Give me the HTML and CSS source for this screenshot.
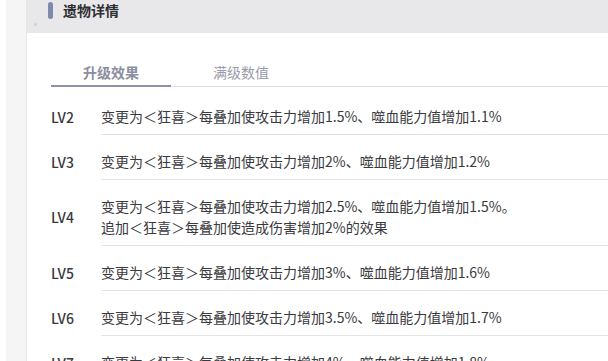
FILE: index.html
```html
<!DOCTYPE html>
<html lang="zh-CN">
<head>
<meta charset="utf-8">
<link rel="stylesheet" href="styles.css">
</head>
<body>
<div class="page">
  <aside class="rail"></aside>
  <main class="panel">
    <header class="head">
      <div class="title-row">
        <span class="accent"></span>
        <h1 class="title">遗物详情</h1>
      </div>
      <span class="dot"></span>
    </header>
    <section class="body">
      <nav class="tabs">
        <div class="tab active">升级效果</div>
        <div class="tab">满级数值</div>
      </nav>
      <ul class="levels">
        <li class="row"><span class="lv">LV2</span><div class="desc">变更为＜狂喜＞每叠加使攻击力增加1.5%、噬血能力值增加1.1%</div></li>
        <li class="row"><span class="lv">LV3</span><div class="desc">变更为＜狂喜＞每叠加使攻击力增加2%、噬血能力值增加1.2%</div></li>
        <li class="row"><span class="lv">LV4</span><div class="desc">变更为＜狂喜＞每叠加使攻击力增加2.5%、噬血能力值增加1.5%。<br>追加＜狂喜＞每叠加使造成伤害增加2%的效果</div></li>
        <li class="row"><span class="lv">LV5</span><div class="desc">变更为＜狂喜＞每叠加使攻击力增加3%、噬血能力值增加1.6%</div></li>
        <li class="row"><span class="lv">LV6</span><div class="desc">变更为＜狂喜＞每叠加使攻击力增加3.5%、噬血能力值增加1.7%</div></li>
        <li class="row"><span class="lv">LV7</span><div class="desc">变更为＜狂喜＞每叠加使攻击力增加4%、噬血能力值增加1.8%</div></li>
      </ul>
    </section>
  </main>
</div>
</body>
</html>
```
FILE: styles.css
```css
* { box-sizing: border-box; }
html, body { margin: 0; padding: 0; background: #fff; }
body {
  width: 608px;
  height: 361px;
  overflow: hidden;
  font-family: "Noto Sans CJK SC", "Noto Sans", sans-serif;
  color: #333;
}
.page { display: flex; height: 361px; }
.rail {
  flex: 0 0 27px;
  background: #f5f5f6;
  border-left: 6px solid #fff;
  border-right: 1px solid #e4e4e6;
}
.panel { flex: 1; min-width: 0; }
.head {
  position: relative;
  height: 33px;
  background: #e8e8ea;
  padding-left: 21px;
}
.title-row { display: flex; align-items: center; height: 21px; gap: 10px; }
.accent {
  width: 5px;
  height: 17px;
  border-radius: 3px;
  background: #7f8aab;
  margin-top: -1px;
}
.title {
  margin: 0;
  font-size: 14px;
  font-weight: 700;
  line-height: 21px;
  color: #2f2f33;
}
.dot {
  position: absolute;
  left: 7px;
  top: 23px;
  width: 3px;
  height: 3px;
  background: #d6d6d9;
}
.body { padding: 0 0 0 24px; }
.tabs {
  display: flex;
  gap: 10px;
  margin-top: 29px;
  border-bottom: 1px solid #e3e3e5;
}
.tab {
  width: 120px;
  text-align: center;
  font-size: 14px;
  line-height: 20px;
  padding: 0 0 4px;
  color: #9a9cab;
}
.tab.active {
  font-weight: 700;
  color: #8a8e9f;
  box-shadow: inset 0 -2px 0 #8e93a6;
  margin-bottom: -1px;
  padding-bottom: 5px;
}
.levels { list-style: none; margin: 3px 0 0; padding: 0; }
.row { display: flex; align-items: stretch; }
.lv {
  flex: 0 0 50px;
  display: flex;
  align-items: center;
  padding-top: 8px;
  font-size: 14px;
  font-weight: 500;
  color: #3a3a3e;
}
.desc {
  flex: 1;
  padding: 16px 0 7px;
  border-bottom: 1px solid #e3e3e5;
  font-size: 14px;
  line-height: 21px;
  color: #3a3a3e;
  white-space: nowrap;
}
```
